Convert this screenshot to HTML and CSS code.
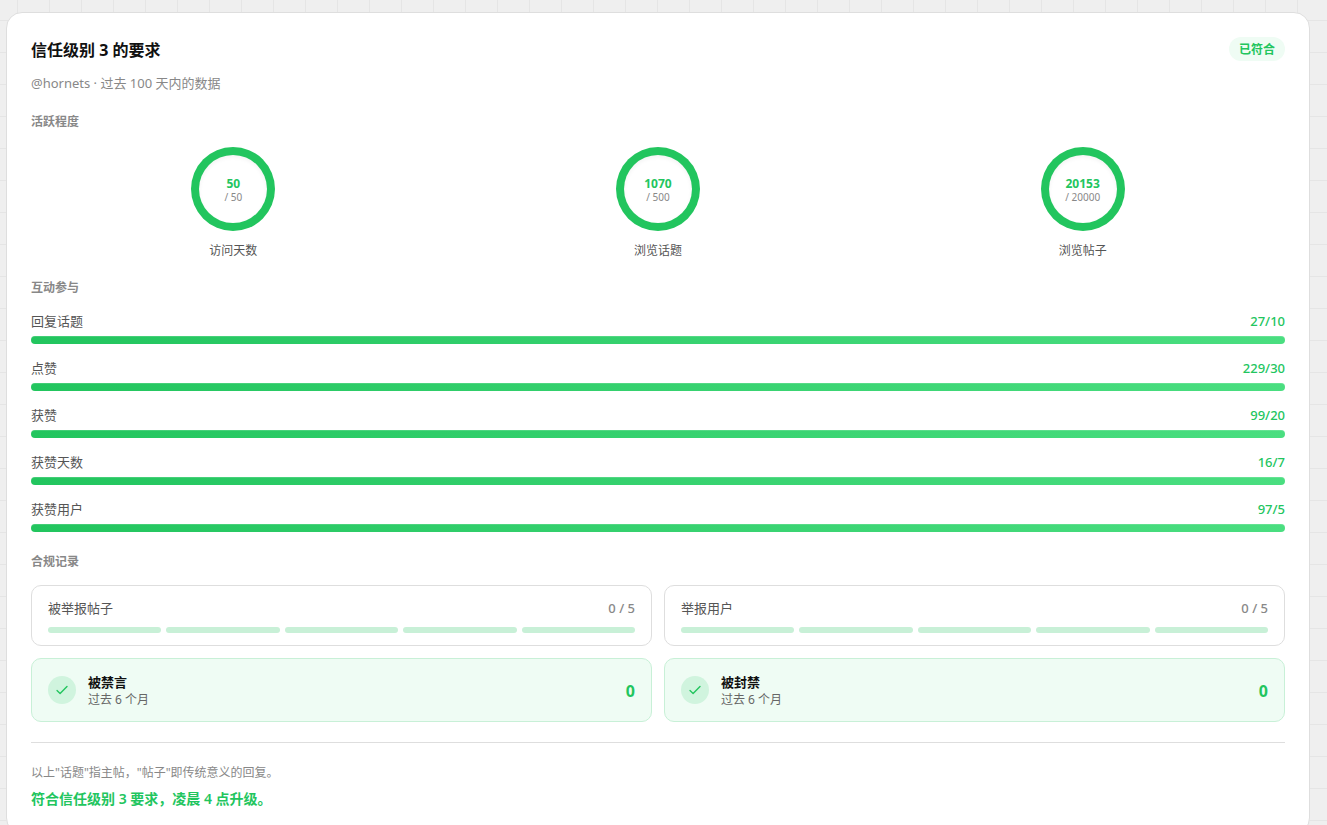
FILE: index.html
```html
<!DOCTYPE html>
<html lang="zh-CN">
<head>
<meta charset="utf-8">
<meta name="viewport" content="width=device-width, initial-scale=1">
<title>信任级别 3 的要求</title>
<link rel="stylesheet" href="styles.css">
</head>
<body>
<main class="card">
  <header class="card-header">
    <h1 class="card-title">信任级别 3 的要求</h1>
    <span class="badge">已符合</span>
  </header>
  <p class="subtitle">@hornets · 过去 100 天内的数据</p>

  <section class="section">
    <h2 class="section-title">活跃程度</h2>
    <div class="rings">
      <div class="ring-item">
        <div class="ring"><div class="ring-inner"><span class="ring-value">50</span><span class="ring-target">/ 50</span></div></div>
        <span class="ring-label">访问天数</span>
      </div>
      <div class="ring-item">
        <div class="ring"><div class="ring-inner"><span class="ring-value">1070</span><span class="ring-target">/ 500</span></div></div>
        <span class="ring-label">浏览话题</span>
      </div>
      <div class="ring-item">
        <div class="ring"><div class="ring-inner"><span class="ring-value">20153</span><span class="ring-target">/ 20000</span></div></div>
        <span class="ring-label">浏览帖子</span>
      </div>
    </div>
  </section>

  <section class="section">
    <h2 class="section-title">互动参与</h2>
    <div class="bars">
      <div class="bar-item"><div class="row"><span class="label">回复话题</span><span class="bar-value">27/10</span></div><div class="bar"></div></div>
      <div class="bar-item"><div class="row"><span class="label">点赞</span><span class="bar-value">229/30</span></div><div class="bar"></div></div>
      <div class="bar-item"><div class="row"><span class="label">获赞</span><span class="bar-value">99/20</span></div><div class="bar"></div></div>
      <div class="bar-item"><div class="row"><span class="label">获赞天数</span><span class="bar-value">16/7</span></div><div class="bar"></div></div>
      <div class="bar-item"><div class="row"><span class="label">获赞用户</span><span class="bar-value">97/5</span></div><div class="bar"></div></div>
    </div>
  </section>

  <section class="section">
    <h2 class="section-title">合规记录</h2>
    <div class="records">
      <div class="quota">
        <div class="row"><span class="label">被举报帖子</span><span class="quota-value">0 / 5</span></div>
        <div class="segments"><i class="segment"></i><i class="segment"></i><i class="segment"></i><i class="segment"></i><i class="segment"></i></div>
      </div>
      <div class="quota">
        <div class="row"><span class="label">举报用户</span><span class="quota-value">0 / 5</span></div>
        <div class="segments"><i class="segment"></i><i class="segment"></i><i class="segment"></i><i class="segment"></i><i class="segment"></i></div>
      </div>
      <div class="status">
        <span class="status-icon"><svg class="check" viewBox="0 0 14 14" aria-hidden="true"><path d="M2 7.6 5.1 10.4 12 3.4"/></svg></span>
        <div class="status-text"><strong class="status-name">被禁言</strong><span class="status-period">过去 6 个月</span></div>
        <span class="status-count">0</span>
      </div>
      <div class="status">
        <span class="status-icon"><svg class="check" viewBox="0 0 14 14" aria-hidden="true"><path d="M2 7.6 5.1 10.4 12 3.4"/></svg></span>
        <div class="status-text"><strong class="status-name">被封禁</strong><span class="status-period">过去 6 个月</span></div>
        <span class="status-count">0</span>
      </div>
    </div>
  </section>

  <footer class="card-footer">
    <p class="note">以上"话题"指主帖，"帖子"即传统意义的回复。</p>
    <p class="result">符合信任级别 3 要求，凌晨 4 点升级。</p>
  </footer>
</main>
</body>
</html>
```

FILE: styles.css
```css
* {
  box-sizing: border-box;
}

html {
  scrollbar-width: none;
}

body {
  margin: 0;
  padding: 12px 17px 12px 6px;
  background-color: #efefef;
  background-image:
    linear-gradient(to right, #e5e5e5 1px, transparent 1px),
    linear-gradient(to bottom, #e5e5e5 1px, transparent 1px);
  background-size: 32px 32px;
  background-position: 17px 20px;
  color: #111;
  font-family: "Noto Sans", "Noto Sans CJK SC", sans-serif;
  font-size: 13px;
  line-height: 20px;
}

h1,
h2,
p {
  margin: 0;
}

.card {
  padding: 24px;
  border: 1px solid #dedede;
  border-radius: 16px;
  background: #fff;
}

.card-header {
  display: flex;
  align-items: flex-start;
  justify-content: space-between;
}

.row {
  display: flex;
  align-items: center;
  justify-content: space-between;
}

.card-title {
  font-size: 16px;
  font-weight: 700;
  line-height: 26px;
}

.badge {
  padding: 5px 10px 3px;
  border-radius: 12px;
  background: #effcf4;
  color: #22c55e;
  font-size: 12px;
  font-weight: 600;
  line-height: 16px;
}

.subtitle {
  margin-top: 10px;
  color: #888;
}

.section {
  margin-top: 20px;
}

.section + .section {
  margin-top: 18px;
}

.section-title {
  margin-bottom: 14px;
  color: #888;
  font-size: 12px;
  font-weight: 600;
  line-height: 18px;
}

.rings {
  display: grid;
  grid-template-columns: repeat(3, 1fr);
  gap: 20px;
  padding-top: 2px;
}

.ring-item {
  display: flex;
  flex-direction: column;
  align-items: center;
  gap: 10px;
}

.ring {
  width: 84px;
  height: 84px;
  padding: 8px;
  border-radius: 50%;
  background: #22c55e;
}

.ring-inner {
  display: flex;
  flex-direction: column;
  align-items: center;
  justify-content: center;
  height: 100%;
  padding-top: 2px;
  border-radius: 50%;
  background: #fff;
  box-shadow: inset 0 2px 4px rgba(0, 0, 0, 0.05);
}

.ring-value {
  color: #22c55e;
  font-size: 12px;
  font-weight: 700;
  line-height: 14px;
}

.ring-target {
  color: #888;
  font-size: 10px;
  line-height: 12px;
}

.ring-label {
  color: #555;
  font-size: 12px;
}

.bars {
  display: grid;
  gap: 14px;
  padding-bottom: 3px;
}

.bar-item {
  display: grid;
  gap: 5px;
}

.label {
  color: #555;
}

.bar-value {
  color: #22c55e;
  font-weight: 500;
}

.bar {
  height: 8px;
  border-radius: 4px;
  background: linear-gradient(90deg, #22c55e, #4ade80);
  box-shadow: inset 0 1px 0 rgba(255, 255, 255, 0.15);
}

.records {
  display: grid;
  grid-template-columns: repeat(2, 1fr);
  gap: 12px;
}

.quota,
.status {
  border: 1px solid #dedede;
  border-radius: 10px;
}

.quota {
  padding: 12px 16px;
}

.quota-value {
  color: #888;
  font-weight: 500;
}

.segments {
  display: flex;
  gap: 5px;
  margin-top: 9px;
}

.segment {
  flex: 1;
  height: 6px;
  border-radius: 3px;
  background: #c8f0d7;
}

.status {
  display: flex;
  align-items: center;
  gap: 12px;
  padding: 12px 16px;
  border-color: #c8f0d7;
  background: #effcf4;
}

.status-icon {
  display: grid;
  place-items: center;
  width: 28px;
  height: 28px;
  border-radius: 50%;
  background: #d0f4de;
}

.check {
  width: 14px;
  height: 14px;
  fill: none;
  stroke: #22c55e;
  stroke-width: 1.4;
  stroke-linecap: round;
  stroke-linejoin: round;
}

.status-text {
  display: flex;
  flex: 1;
  flex-direction: column;
  padding-top: 2px;
  line-height: 18px;
}

.status-name {
  font-weight: 600;
}

.status-period {
  color: #666;
  font-size: 12px;
}

.status-count {
  padding-top: 2px;
  color: #22c55e;
  font-size: 16px;
  font-weight: 700;
}

.card-footer {
  margin-top: 20px;
  padding-top: 20px;
  border-top: 1px solid #dedede;
}

.note {
  color: #888;
  font-size: 12px;
}

.result {
  margin-top: 6px;
  color: #22c55e;
  font-size: 14px;
  font-weight: 600;
}
```
